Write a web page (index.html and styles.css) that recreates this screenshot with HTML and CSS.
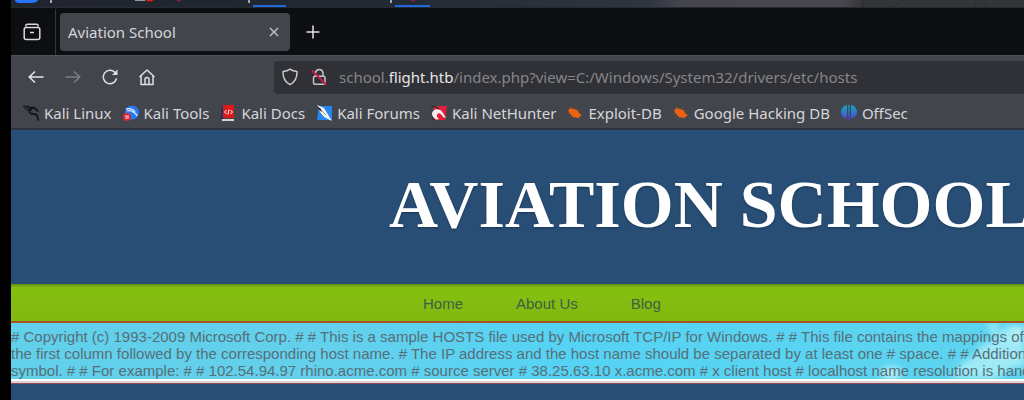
FILE: index.html
```html
<!DOCTYPE html>
<html lang="en">
<head>
<meta charset="utf-8">
<title>Aviation School</title>
<link rel="stylesheet" href="styles.css">
</head>
<body>
<div class="panel" aria-hidden="true">
<svg class="panel-art" height="8" width="1024" viewBox="0 0 1024 8">
<defs><filter id="soft"><feGaussianBlur stdDeviation="0.6"/></filter></defs>
<path d="M864 0h160v8H862z" fill="#343539"/>
<path d="M864 0l-2 8M903 0l-14 8M975 3v5M986 3v5" stroke="#292b2f" stroke-width="1" fill="none"/>
<path d="M15 0h23q-1 3-7 3H20q-5 0-5-3z" fill="#2576fb" filter="url(#soft)"/>
<path d="M51 0v3M249 0v3M391 0v3" stroke="#a2a5a9" stroke-width="2"/>
<path d="M135 0h10v1h-10z" fill="#9b9b9b"/>
<path d="M145 0h9q-4 3-9 0z" fill="#e11d1d"/>
<path d="M176 0h6l-3 2zM410 0h6l-3 2z" fill="#8b203d"/>
<path d="M253 5h33v2h-33zM395 5h35v2h-35z" fill="#2167df"/>
</svg>
</div>
<div class="browser">
<div class="tabs">
<button class="recent" aria-label="Recent browsing"><svg width="18" height="18" viewBox="0 0 18 18" fill="none" stroke="#dcdce0" stroke-width="1.5"><path d="M4 1.200h10M2.500 3.500Q3 1.200 4 1.200M15.500 3.500Q15 1.200 14 1.200"/><rect x="1.200" y="4.500" width="15.600" height="12" rx="2"/><path d="M7 9.500h4"/></svg></button>
<div class="tab"><span class="tab-title">Aviation School</span><button class="close" aria-label="Close tab"><svg width="10" height="10" viewBox="0 0 10 10" stroke="#c9c9cd" stroke-width="1.200"><path d="M1 1l8 8M9 1L1 9"/></svg></button></div>
<button class="new" aria-label="New tab"><svg width="14" height="14" viewBox="0 0 14 14" stroke="#e4e4e8" stroke-width="1.500"><path d="M7 .5v13M.5 7h13"/></svg></button>
</div>
<div class="toolbar">
<div class="nav">
<button aria-label="Back"><svg width="18" height="18" viewBox="0 0 18 18" fill="none" stroke="#e6e6e8" stroke-width="1.500"><path d="M16.500 9H2.500M8 3.500L2.200 9 8 14.500"/></svg></button>
<button aria-label="Forward"><svg width="18" height="18" viewBox="0 0 18 18" fill="none" stroke="#7d7e84" stroke-width="1.500"><path d="M1.500 9h14M10 3.500L15.800 9 10 14.500"/></svg></button>
<button aria-label="Reload"><svg width="18" height="18" viewBox="0 0 18 18" fill="none" stroke="#e0e0e3" stroke-width="1.500"><path d="M15.500 10.500A6.700 6.700 0 1 1 13.800 4.300L15.500 6"/><path d="M16.500 1.500v5.500H11z" fill="#e0e0e3" stroke="none"/></svg></button>
<button aria-label="Home"><svg width="18" height="18" viewBox="0 0 18 18" fill="none" stroke="#e0e0e3" stroke-width="1.500" stroke-linejoin="round"><path d="M1.500 9L9 2l7.500 7"/><path d="M3 8v8.500h12V8"/><path d="M7 16.500v-5a2 2 0 0 1 4 0v5"/></svg></button>
</div>
<div class="address">
<svg width="18" height="18" viewBox="0 0 18 18" fill="none" stroke="#c8c8cb" stroke-width="1.500" stroke-linejoin="round"><path d="M9 1.200c2.400 1.700 4.500 2.100 7 2.300.2 5.800-2 10.500-7 13.200C4 14 1.800 9.300 2 3.500c2.500-.2 4.600-.6 7-2.300z"/></svg>
<svg width="18" height="18" viewBox="0 0 18 18" fill="none" stroke="#c4c4c7" stroke-width="1.500"><path d="M5.500 8V4.800a3.800 3.800 0 0 1 7.500 0V8"/><rect x="3.500" y="8.200" width="11.500" height="8" rx="1.500"/><path d="M2 2.500l14 14" stroke="#d01b49" stroke-width="1.800"/></svg>
<div class="url" role="textbox" aria-label="Address" contenteditable="true" spellcheck="false">school.<b>flight.htb</b>/index.php?view=C:/Windows/System32/drivers/etc/hosts</div>
</div>
</div>
<nav class="bookmarks" aria-label="Bookmarks">
<a href="#"><svg width="16" height="16" viewBox="0 0 16 16" fill="none" stroke="#151619"><path d="M0 1.500c4-1 7 0 9 2M1 3.500c3-1 6-.5 8 .2M3 5.500c3-1 5-1 6-.5" stroke-width="1.200"/><path d="M8 2.500c3 0 5 1 6 3l1.500 1M9 4c-4 1-3 5 1 5 3 0 5 1 5 5l1 2" stroke-width="1.800"/></svg>Kali Linux</a>
<a href="#"><svg width="16" height="16" viewBox="0 0 16 16"><circle cx="9" cy="7.500" r="7" fill="#2678f5"/><path d="M3 4c4-1 7 0 9 3M4 6c3-1 5 0 6 1 2 1 3 1 4 4" fill="none" stroke="#e4edfc" stroke-width="1.300"/><circle cx="4" cy="12" r="4" fill="#db292f"/><path d="M2 11h4M3.200 11v3M5 11v3" stroke="#f6d1d3"/></svg>Kali Tools</a>
<a href="#"><svg width="16" height="16" viewBox="0 0 16 16"><path d="M1 1h3v13H1z" fill="#27315d"/><path d="M3 0h11v13H3z" fill="#dc1919"/><path d="M2 14h12v2H2z" fill="#d8d2d2"/><path d="M6.500 5L4.500 7l2 2M10.500 5l2 2-2 2M9 4.500l-1 5" fill="none" stroke="#fff"/></svg>Kali Docs</a>
<a href="#"><svg width="16" height="16" viewBox="0 0 16 16"><path d="M3 1h13v14H1z" fill="#2787ef"/><path d="M1 0l7 3 3 5 5 8-8-4-4-5z" fill="#f3f3f2"/><path d="M0 0l5 4 1 3-3-2z" fill="#25282d"/><path d="M5 5l5 5" fill="none" stroke="#999"/></svg>Kali Forums</a>
<a href="#"><svg width="16" height="16" viewBox="0 0 16 16"><path d="M3 1h13l-2 14H2z" fill="#e3203b"/><path d="M2 12c-4-7 6-11 10-4l3 5-3-1c-3-6-7-4-6 0l2 2c-3 1-5 0-6-2z" fill="#f5eeee"/><path d="M0 1l5 1 3 2M1 12l3 3" fill="none" stroke="#27272b" stroke-width="1.200"/></svg>Kali NetHunter</a>
<a href="#"><svg width="16" height="16" viewBox="0 0 16 16"><path d="M1 5l3-2 6 2 3 4 2 1-4 3-5-1-3-3z" fill="#ec6413"/><path d="M5 3L2 2m7 2V2m2 4l3-1M3 8L0 9m4 2l-2 2m5-1l-1 2m5-1l2 1" stroke="#a9572b" stroke-width=".5"/></svg>Exploit-DB</a>
<a href="#"><svg width="16" height="16" viewBox="0 0 16 16"><path d="M1 5l3-2 6 2 3 4 2 1-4 3-5-1-3-3z" fill="#ec6413"/><path d="M5 3L2 2m7 2V2m2 4l3-1M3 8L0 9m4 2l-2 2m5-1l-1 2m5-1l2 1" stroke="#a9572b" stroke-width=".5"/></svg>Google Hacking DB</a>
<a href="#"><svg width="16" height="16" viewBox="0 0 16 16"><defs><linearGradient id="off" x2="0" y2="1"><stop stop-color="#12a5bb"/><stop offset=".5" stop-color="#3176cf"/><stop offset="1" stop-color="#602bc4"/></linearGradient></defs><path d="M6 0v14C-2 12-2 2 6 0zM7.300 0h1.400v16H7.300zM10 0c8 2 8 12 0 14z" fill="url(#off)"/></svg>OffSec</a>
</nav>
<main class="site">
<header class="banner"><h1>AVIATION SCHOOL</h1></header>
<nav class="menu" aria-label="Site"><a href="#">Home</a><a href="#">About Us</a><a href="#">Blog</a></nav>
<section class="hosts">
<svg class="clouds" aria-hidden="true" width="200" height="56" viewBox="0 0 200 56"><defs><filter id="cloud" x="-20%" y="-20%" width="140%" height="140%"><feGaussianBlur stdDeviation="3"/></filter></defs><g fill="#b4f2f8" filter="url(#cloud)"><ellipse cx="67" cy="50" rx="11" ry="6"/><path d="M128 55q7-17 20-20l10-13q11-2 15-12l12-7h15v40l-15 3-12 10z" opacity=".75"/><path d="M163 0h12l-6 14zM185 3h15v14l-10 3z" opacity=".8"/></g></svg>
<p># Copyright (c) 1993-2009 Microsoft Corp. # # This is a sample HOSTS file used by Microsoft TCP/IP for Windows. # # This file contains the mappings of IP a<br>the first column followed by the corresponding host name. # The IP address and the host name should be separated by at least one # space. # # Additionally,<br>symbol. # # For example: # # 102.54.94.97 rhino.acme.com # source server # 38.25.63.10 x.acme.com # x client host # localhost name resolution is handled</p>
</section>
</main>
</div>
</body>
</html>
```
FILE: styles.css
```css
* { box-sizing: border-box; }
body {
  margin: 0;
  min-height: 100vh;
  display: flex;
  flex-direction: column;
  padding-left: 11px;
  overflow: hidden;
  background: #000;
  font-family: "Noto Sans", sans-serif;
}
svg { display: block; flex: none; }
button { border: 0; padding: 0; background: none; display: flex; align-items: center; justify-content: center; }
a { text-decoration: none; }
.panel {
  height: 8px;
  overflow: hidden;
  background: linear-gradient(90deg, #20242e, #202933 34%, #2d3541 63%, #45454f 66%, #484750 82%, #343539 84%);
  border-bottom: 1px solid #292a2f;
}
.panel-art { margin-left: -11px; }
.browser { flex: 1; display: flex; flex-direction: column; }
.tabs {
  height: 47px;
  display: flex;
  align-items: center;
  background: #0d0e12;
}
.recent { width: 45px; height: 46px; padding-right: 3px; border-right: 1px solid #34353a; }
.tab {
  width: 230px;
  height: 38px;
  margin-left: 4px;
  padding: 0 11px 0 8px;
  display: flex;
  align-items: center;
  justify-content: space-between;
  border-radius: 4px;
  background: #43454c;
  color: #d6d6d9;
  font-size: 15px;
}
.new { width: 46px; height: 38px; }
.toolbar {
  height: 43px;
  display: flex;
  align-items: center;
  background: #43454c;
  border-top: 1px solid #505158;
}
.nav { width: 263px; padding-left: 16px; display: flex; gap: 19px; flex: none; }
.address {
  flex: 1;
  height: 33px;
  padding-left: 7px;
  display: flex;
  align-items: center;
  gap: 11px;
  border-radius: 4px 0 0 4px;
  background: #303136;
  color: #85868a;
  font-size: 15px;
  white-space: nowrap;
  overflow: hidden;
}
.url { outline: 0; }
.url b { color: #e6e6e8; font-weight: 400; }
.bookmarks {
  height: 32px;
  padding-left: 12px;
  display: flex;
  align-items: center;
  gap: 11px;
  background: #43454c;
  border-bottom: 2px solid #2b323b;
  white-space: nowrap;
}
.bookmarks a { display: flex; align-items: center; gap: 5px; color: #d6d6d9; font-size: 15px; }
.site { flex: 1; overflow: hidden; background: #284e75; font-family: "Liberation Sans", Arial, sans-serif; }
.banner {
  height: 154px;
  padding: 0 0 7px 378px;
  display: flex;
  align-items: center;
  white-space: nowrap;
}
h1 {
  margin: 0;
  color: #fff;
  font: 700 68px/72px "Liberation Serif", serif;
  text-shadow: 0 1px 2px #193653;
}
.menu {
  height: 39px;
  padding: 2px 0 0 412px;
  display: flex;
  align-items: center;
  gap: 53px;
  background: linear-gradient(#648f18, #84c010 10%, #82b810);
  border-bottom: 2px solid #a55322;
}
.menu a { color: #3d6046; font-size: 15px; }
.hosts {
  position: relative;
  overflow: hidden;
  background: linear-gradient(90deg, #61d0ea, #63d0ec 32%, #55d3f4 55%, #5dd4ef);
  border-bottom: 1px solid #964b57;
  box-shadow: inset 0 -2px #d8d3d5, inset 0 -4px #fff;
}
.clouds { position: absolute; right: 0; top: 0; }
.hosts p {
  position: relative;
  margin: 0;
  padding: 5px 0 4px;
  color: #566f78;
  font-size: 15px;
  line-height: 17px;
  white-space: nowrap;
}
```
